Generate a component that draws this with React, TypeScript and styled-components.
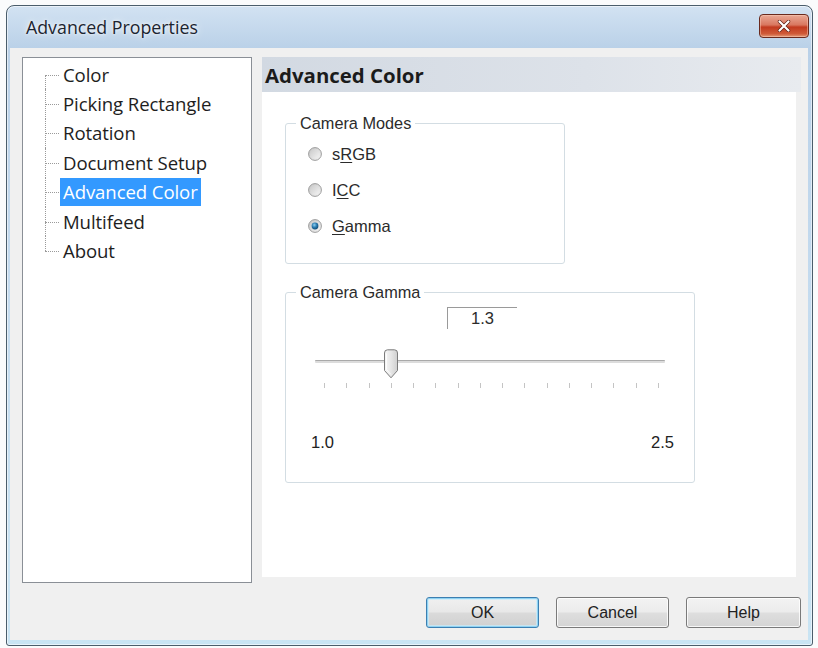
import React from "react";
import styled, {createGlobalStyle, css} from "styled-components";

const GlobalStyle = createGlobalStyle`
    html, body {
        margin: 0;
        padding: 0;
        background: #fafbfc;
    }
    body {
        width: 818px;
        height: 648px;
        overflow: hidden;
    }
`;

const uiFont = `"Liberation Sans", Arial, sans-serif`;
const treeFont = `"Open Sans", "Noto Sans", sans-serif`;

const Window = styled.div`
    margin: 5px 0 0 6px;
    width: 807px;
    height: 641px;
    box-sizing: border-box;
    border: 1px solid #4a5d6b;
    border-radius: 8px 8px 3px 3px;
    background: linear-gradient(#d2e2f2, #bad1e8 42px, #c4dbef 300px, #c9e4f3);
    box-shadow: inset 0 0 0 1px rgba(255, 255, 255, 0.55);
    display: flex;
    flex-direction: column;
    padding: 0 4px 5px 3px;
`;

const TitleBar = styled.div`
    height: 42px;
    display: flex;
    align-items: center;
    justify-content: space-between;
    padding-left: 16px;
`;

const Title = styled.span`
    font-family: ${treeFont};
    font-size: 17.8px;
    color: #1b2430;
    text-shadow: 0 0 8px rgba(255, 255, 255, 0.9), 0 0 3px rgba(255, 255, 255, 0.9);
`;

const CloseButton = styled.button`
    align-self: flex-start;
    margin-top: 8px;
    margin-right: -1px;
    width: 50px;
    height: 24px;
    box-sizing: border-box;
    border: 1px solid #6a2a1e;
    border-radius: 4px;
    background: linear-gradient(#e9a996, #d9775f 45%, #c23a1f 55%, #cf5a38 85%, #e39a78);
    box-shadow: inset 0 0 0 1px rgba(255, 210, 190, 0.45);
    display: flex;
    align-items: center;
    justify-content: center;
    padding: 0;
`;

const Client = styled.div`
    flex: 1;
    background: #f0f0f0;
    display: flex;
    flex-direction: column;
    padding: 9px 7px 12px 12px;
    box-sizing: border-box;
`;

const MainRow = styled.div`
    height: 526px;
    display: grid;
    grid-template-columns: 230px 1fr;
    column-gap: 10px;
`;

const TreePanel = styled.ul`
    margin: 0;
    list-style: none;
    background: #fff;
    border: 1px solid #8a8f96;
    box-sizing: border-box;
    padding: 2px 0 0 0;
`;

const TreeRow = styled.li<{ $first?: boolean; $last?: boolean }>`
    position: relative;
    height: 29.4px;
    display: flex;
    align-items: center;
    padding-left: 37px;

    &::before {
        content: "";
        position: absolute;
        left: 22px;
        top: 50%;
        width: 14px;
        border-top: 1px dotted #9a9a9a;
    }

    &::after {
        content: "";
        position: absolute;
        left: 22px;
        top: ${p => (p.$first ? "50%" : "0")};
        bottom: ${p => (p.$last ? "50%" : "0")};
        border-left: 1px dotted #9a9a9a;
    }
`;

const TreeLabel = styled.span<{ $selected?: boolean }>`
    font-family: ${treeFont};
    font-size: 18.6px;
    line-height: 28px;
    letter-spacing: -0.1px;
    padding: 0 3px;
    color: #1e1e1e;
    ${p => p.$selected && css`
        background: #3399ff;
        color: #fff;
    `}
`;

const RightColumn = styled.div`
    display: flex;
    flex-direction: column;
`;

const PageHeader = styled.div`
    height: 35px;
    flex-shrink: 0;
    background: linear-gradient(to right, #d2d9e2, #dde2e9 60%, #e8ebef);
    display: flex;
    align-items: center;
    padding-left: 3px;
    font-family: ${treeFont};
    font-weight: 700;
    font-size: 20.4px;
    color: #1b1b1b;
`;

const Page = styled.div`
    flex: 1;
    background: #fff;
    margin: 0 5px 6px 0;
    padding: 31px 0 0 23px;
    display: flex;
    flex-direction: column;
    align-items: flex-start;
    gap: 28px;
`;

const Group = styled.div<{ $w: number; $h: number }>`
    width: ${p => p.$w}px;
    height: ${p => p.$h}px;
    box-sizing: border-box;
    border: 1px solid #d3dde3;
    border-radius: 3px;
    display: flex;
    flex-direction: column;
    align-items: flex-start;
`;

const Legend = styled.span`
    margin: -11px 0 0 10px;
    padding: 0 4px;
    background: #fff;
    font-family: ${uiFont};
    font-size: 16.3px;
    line-height: 20px;
    color: #2b2b2b;
`;

const RadioList = styled.div`
    display: flex;
    flex-direction: column;
    gap: 22px;
    margin: 14px 0 0 22px;
`;

const RadioRow = styled.label`
    display: flex;
    align-items: center;
    gap: 10px;
    height: 14px;
    font-family: ${uiFont};
    font-size: 16.5px;
    color: #2b2b2b;
`;

const Key = styled.span`
    text-decoration: underline;
    text-underline-offset: 2px;
`;

const ValueBox = styled.div`
    margin: 5px 0 0 161px;
    width: 70px;
    height: 22px;
    box-sizing: border-box;
    border-top: 1px solid #9a9a9a;
    border-left: 1px solid #9a9a9a;
    display: flex;
    align-items: center;
    justify-content: center;
    font-family: ${uiFont};
    font-size: 16.5px;
    color: #2b2b2b;
`;

const SliderBox = styled.div`
    position: relative;
    margin: 20px 0 0 29px;
    width: 350px;
    height: 30px;
`;

const Track = styled.div`
    margin-top: 11px;
    height: 3px;
    box-sizing: border-box;
    background: #dcdcdc;
    border-top: 1px solid #a9a9a9;
    border-radius: 1px;
`;

const Thumb = styled.svg`
    position: absolute;
    top: 0;
`;

const TickRow = styled.div`
    margin: 4px 0 0 29px;
    width: 350px;
    box-sizing: border-box;
    padding: 0 6px 0 9px;
    display: flex;
    justify-content: space-between;
`;

const Tick = styled.span`
    width: 1px;
    height: 5px;
    background: #c4c4c4;
`;

const RangeRow = styled.div`
    align-self: stretch;
    margin-top: 44px;
    padding: 0 20px 0 25px;
    display: flex;
    justify-content: space-between;
    font-family: ${uiFont};
    font-size: 16.5px;
    line-height: 20px;
    color: #222;
`;

const Footer = styled.div`
    margin-top: 14px;
    display: flex;
    justify-content: flex-end;
    gap: 17px;
`;

const Button = styled.button<{ $w: number; $default?: boolean }>`
    width: ${p => p.$w}px;
    height: 31px;
    box-sizing: border-box;
    border: 1px solid #7a7a7a;
    border-radius: 3px;
    background: linear-gradient(#f3f3f3, #ececec 48%, #dedede 52%, #d4d4d4);
    box-shadow: inset 0 0 0 1px rgba(255, 255, 255, 0.8);
    font-family: ${uiFont};
    font-size: 16px;
    color: #222;
    padding: 0;
    ${p => p.$default && css`
        border-color: #3c7fb1;
        background: linear-gradient(#f0f0f0, #e8e8e8 48%, #dadada 52%, #d0d0d0);
        box-shadow: inset 0 0 0 1px #8fd2f2, inset 0 0 0 2px rgba(200, 236, 252, 0.7);
    `}
`;

const treeItems = ["Color", "Picking Rectangle", "Rotation", "Document Setup", "Advanced Color", "Multifeed", "About"];
const selectedItem = "Advanced Color";

const gamma = {min: 1.0, max: 2.5, step: 0.1, value: 1.3};
const tickCount = Math.round((gamma.max - gamma.min) / gamma.step) + 1;
const tickSpan = 335;

const Radio: React.FC<{ checked?: boolean }> = ({checked}) => (
    <svg width="14" height="14" viewBox="0 0 14 14">
        <defs>
            <linearGradient id="radioRing" x1="0" y1="0" x2="1" y2="1">
                <stop offset="0" stopColor="#c4c4c4"/>
                <stop offset="1" stopColor="#f6f6f6"/>
            </linearGradient>
            <linearGradient id="radioInner" x1="0" y1="0" x2="1" y2="1">
                <stop offset="0" stopColor="#cdcdcd"/>
                <stop offset="1" stopColor="#f2f2f2"/>
            </linearGradient>
            <radialGradient id="radioDot" cx="0.4" cy="0.35" r="0.7">
                <stop offset="0" stopColor="#8ed0f2"/>
                <stop offset="0.5" stopColor="#2c7cb0"/>
                <stop offset="1" stopColor="#0d4770"/>
            </radialGradient>
        </defs>
        <circle cx="7" cy="7" r="6.4" fill="url(#radioRing)" stroke="#949494" strokeWidth="0.9"/>
        <circle cx="7" cy="7" r="4.4" fill="url(#radioInner)"/>
        {checked && <circle cx="7" cy="7" r="3.4" fill="url(#radioDot)"/>}
    </svg>
);

const App: React.FC = () => {
    const frac = (gamma.value - gamma.min) / (gamma.max - gamma.min);
    return (
        <>
            <GlobalStyle/>
            <Window>
                <TitleBar>
                    <Title>Advanced Properties</Title>
                    <CloseButton aria-label="Close">
                        <svg width="14" height="12" viewBox="0 0 14 12">
                            <path d="M2.5 1.5 L11.5 10.5 M11.5 1.5 L2.5 10.5" stroke="#5a1a10" strokeWidth="3.4" strokeLinecap="round"/>
                            <path d="M2.5 1.5 L11.5 10.5 M11.5 1.5 L2.5 10.5" stroke="#fff" strokeWidth="2.2" strokeLinecap="round"/>
                        </svg>
                    </CloseButton>
                </TitleBar>
                <Client>
                    <MainRow>
                        <TreePanel>
                            {treeItems.map((item, i) => (
                                <TreeRow key={item} $first={i === 0} $last={i === treeItems.length - 1}>
                                    <TreeLabel $selected={item === selectedItem}>{item}</TreeLabel>
                                </TreeRow>
                            ))}
                        </TreePanel>
                        <RightColumn>
                            <PageHeader>Advanced Color</PageHeader>
                            <Page>
                                <Group $w={280} $h={141}>
                                    <Legend>Camera Modes</Legend>
                                    <RadioList>
                                        <RadioRow><Radio/><span>s<Key>R</Key>GB</span></RadioRow>
                                        <RadioRow><Radio/><span>I<Key>C</Key>C</span></RadioRow>
                                        <RadioRow><Radio checked/><span><Key>G</Key>amma</span></RadioRow>
                                    </RadioList>
                                </Group>
                                <Group $w={410} $h={191}>
                                    <Legend>Camera Gamma</Legend>
                                    <ValueBox>{gamma.value.toFixed(1)}</ValueBox>
                                    <SliderBox>
                                        <Track/>
                                        <Thumb width="16" height="30" viewBox="0 0 16 30"
                                               style={{left: 9 + frac * tickSpan - 8}}>
                                            <defs>
                                                <linearGradient id="thumbFill" x1="0" y1="0" x2="1" y2="0">
                                                    <stop offset="0" stopColor="#f7f7f7"/>
                                                    <stop offset="0.5" stopColor="#e6e6e6"/>
                                                    <stop offset="1" stopColor="#cfcfcf"/>
                                                </linearGradient>
                                            </defs>
                                            <path d="M1.5 4 Q1.5 0.8 4.5 0.8 H11.5 Q14.5 0.8 14.5 4 V21.5 L8 28.8 L1.5 21.5 Z"
                                                  fill="url(#thumbFill)" stroke="#7b7b7b" strokeWidth="1"/>
                                            <path d="M3.5 4.5 V20.5 L8 25.5" fill="none" stroke="#fff" strokeWidth="1"
                                                  opacity="0.8"/>
                                        </Thumb>
                                    </SliderBox>
                                    <TickRow>
                                        {Array.from({length: tickCount}, (_, i) => <Tick key={i}/>)}
                                    </TickRow>
                                    <RangeRow>
                                        <span>{gamma.min.toFixed(1)}</span>
                                        <span>{gamma.max.toFixed(1)}</span>
                                    </RangeRow>
                                </Group>
                            </Page>
                        </RightColumn>
                    </MainRow>
                    <Footer>
                        <Button $w={113} $default>OK</Button>
                        <Button $w={113}>Cancel</Button>
                        <Button $w={115}>Help</Button>
                    </Footer>
                </Client>
            </Window>
        </>
    );
};

export default App;
